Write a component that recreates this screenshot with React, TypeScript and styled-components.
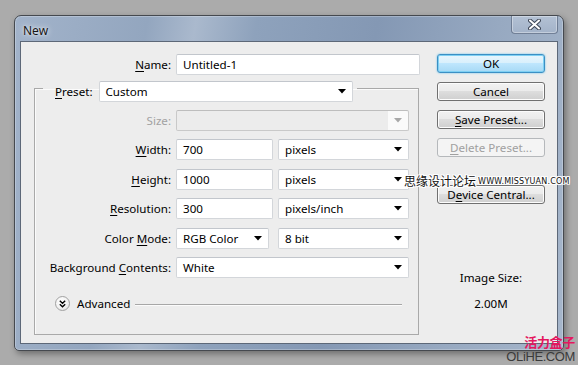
import styled, { createGlobalStyle } from "styled-components";

const GlobalStyle = createGlobalStyle`
  html, body {
    margin: 0;
    padding: 0;
    background: #ababab;
  }
  * {
    box-sizing: border-box;
  }
`;

const FONT = `"Noto Sans", "Liberation Sans", sans-serif`;

const Page = styled.div`
  position: relative;
  width: 578px;
  height: 365px;
  padding: 15px 0 0 14px;
  background: #ababab;
  font-family: ${FONT};
  font-size: 11.6px;
  color: #000;
  overflow: hidden;
`;

const Window = styled.div`
  width: 550px;
  height: 336px;
  display: flex;
  flex-direction: column;
  padding: 0 5px 6px 5px;
  border: 1px solid #45494f;
  border-radius: 7px 7px 5px 5px;
  background: linear-gradient(
    100deg,
    #a2b3ca 0%,
    #93a6bf 22%,
    #aab9cd 30%,
    #8ea2bc 40%,
    #8498b4 60%,
    #97a9c1 80%,
    #a6b6cb 100%
  );
  box-shadow: 0 0 0 1px rgba(255, 255, 255, 0.25) inset, 2px 3px 6px rgba(0, 0, 0, 0.35);
`;

const TitleBar = styled.div`
  height: 25px;
  flex: none;
  display: flex;
  justify-content: space-between;
  align-items: flex-start;
`;

const Title = styled.span`
  margin: 7px 0 0 3px;
  font-size: 12px;
  line-height: 15px;
  color: #151515;
  text-shadow: 0 0 6px rgba(255, 255, 255, 0.9), 0 0 2px rgba(255, 255, 255, 0.7);
`;

const CloseButton = styled.div`
  width: 47px;
  height: 18px;
  display: flex;
  align-items: center;
  justify-content: center;
  border: 1px solid rgba(60, 75, 100, 0.55);
  border-top: none;
  border-radius: 0 0 4px 4px;
  background: linear-gradient(#b3c1d4, #a3b3c9);
  box-shadow: 0 0 0 1px rgba(255, 255, 255, 0.35) inset;
`;

const Client = styled.div`
  flex: 1;
  display: flex;
  border: 1px solid #5d6878;
  background: #ededed;
`;

const LeftPane = styled.div`
  width: 416px;
  flex: none;
`;

const Row = styled.div`
  display: flex;
  align-items: center;
  height: 21px;
`;

const Label = styled.label<{ $width: number; $disabled?: boolean }>`
  width: ${(p) => p.$width}px;
  flex: none;
  text-align: right;
  margin-right: 5px;
  white-space: nowrap;
  color: ${(p) => (p.$disabled ? "#a2a2a2" : "#000")};
  u {
    text-decoration: underline;
    text-underline-offset: 2px;
  }
`;

const NameRow = styled(Row)`
  margin-top: 12px;
`;

const TextBox = styled.div<{ $width: number }>`
  width: ${(p) => p.$width}px;
  height: 21px;
  flex: none;
  display: flex;
  align-items: center;
  padding-left: 6px;
  background: #fff;
  border: 1px solid #d3d6da;
  border-top-color: #c2c6cc;
  border-radius: 2px;
  white-space: nowrap;
`;

const SelectBox = styled.div<{ $width: number; $disabled?: boolean }>`
  width: ${(p) => p.$width}px;
  height: 21px;
  flex: none;
  display: flex;
  align-items: center;
  justify-content: space-between;
  padding-left: 6px;
  background: ${(p) => (p.$disabled ? "#ececec" : "#fff")};
  border: 1px solid ${(p) => (p.$disabled ? "#c9c9c9" : "#d3d6da")};
  border-top-color: ${(p) => (p.$disabled ? "#bdbdbd" : "#c2c6cc")};
  border-radius: 2px;
  white-space: nowrap;
`;

const ArrowCell = styled.div<{ $disabled?: boolean }>`
  width: 20px;
  height: 19px;
  display: flex;
  align-items: center;
  justify-content: center;
  background: ${(p) => (p.$disabled ? "#fafafa" : "transparent")};
  border-radius: 0 2px 2px 0;
  svg path {
    fill: ${(p) => (p.$disabled ? "#a8a8a8" : "#000")};
  }
`;

const GroupBox = styled.fieldset`
  width: 385px;
  margin: 3px 0 0 13px;
  padding: 0 0 20px 8px;
  border: 1px solid #a9a9a9;
  box-shadow: 1px 1px 0 #fbfbfb inset;
  min-inline-size: 0;
`;

const Legend = styled.legend`
  height: 21px;
  padding: 0 4px 0 12px;
`;

const LegendInner = styled.div`
  position: relative;
  top: 3px;
  display: flex;
  align-items: center;
  height: 21px;
`;

const PresetLabel = styled.span`
  margin-right: 6px;
  u {
    text-underline-offset: 2px;
  }
`;

const FieldRows = styled.div`
  display: flex;
  flex-direction: column;
  gap: 8.4px;
  padding-top: 11px;
`;

const Controls = styled.div<{ $gap: number }>`
  display: flex;
  gap: ${(p) => p.$gap}px;
`;

const AdvancedRow = styled.div`
  display: flex;
  align-items: center;
  height: 20px;
  margin: 16px 16px 0 12px;
`;

const Chevron = styled.div`
  width: 15px;
  height: 15px;
  flex: none;
  display: flex;
  align-items: center;
  justify-content: center;
  border-radius: 50%;
  border: 1px solid #a2a2a2;
  background: radial-gradient(circle at 40% 35%, #ffffff 0%, #f2f2f2 55%, #d9d9d9 100%);
`;

const AdvancedText = styled.span`
  margin-left: 7px;
  white-space: nowrap;
`;

const Rule = styled.div`
  flex: 1;
  height: 1px;
  margin: 2px 0 0 5px;
  background: #a7a7a7;
  box-shadow: 0 1px 0 #fbfbfb;
`;

const RightPane = styled.div`
  width: 108px;
  flex: none;
  padding-top: 12px;
  display: flex;
  flex-direction: column;
  align-items: stretch;
`;

const ButtonStack = styled.div`
  display: flex;
  flex-direction: column;
  gap: 9px;
`;

const Button = styled.div<{ $variant?: "default" | "disabled"; $space?: number }>`
  height: 19px;
  margin-top: ${(p) => p.$space ?? 0}px;
  display: flex;
  align-items: center;
  justify-content: center;
  border-radius: 3px;
  white-space: nowrap;
  line-height: 1;
  padding-top: 1px;
  ${(p) =>
    p.$variant === "default"
      ? `
    border: 1px solid #3c8fc4;
    background: linear-gradient(#eaf6fd 0%, #d9f0fc 45%, #bee6fd 50%, #a7d9f5 100%);
    box-shadow: 0 0 0 1px #7fd0f3 inset, 0 0 2px #5cc1ee;
    color: #000;
  `
      : p.$variant === "disabled"
      ? `
    border: 1px solid #b5b8bb;
    background: #f4f4f4;
    color: #a0a0a0;
  `
      : `
    border: 1px solid #707070;
    background: linear-gradient(#f2f2f2 0%, #ebebeb 45%, #dddddd 50%, #cfcfcf 100%);
    box-shadow: 0 0 0 1px #fcfcfc inset;
    color: #000;
  `}
  u {
    text-underline-offset: 2px;
  }
`;

const InfoLabel = styled.div<{ $space: number }>`
  margin-top: ${(p) => p.$space}px;
  text-align: center;
  line-height: 15px;
`;

const SiteMark = styled.div`
  position: absolute;
  left: 404px;
  top: 174px;
  display: flex;
  align-items: center;
  gap: 2px;
  color: #111;
  text-shadow: 1px 0 0 #fff, -1px 0 0 #fff, 0 1px 0 #fff, 0 -1px 0 #fff, 1px 1px 0 #fff,
    -1px -1px 0 #fff, 1px -1px 0 #fff, -1px 1px 0 #fff;
  white-space: nowrap;
`;

const SiteCjk = styled.span`
  font-family: "Noto Sans CJK SC", sans-serif;
  font-size: 12px;
  line-height: 14px;
`;

const SiteUrl = styled.span`
  font-family: "DejaVu Sans", sans-serif;
  font-size: 8px;
  letter-spacing: 0.2px;
  line-height: 10px;
  margin-top: 2px;
`;

const BrandMark = styled.div`
  position: absolute;
  right: 3px;
  bottom: 2px;
  display: flex;
  flex-direction: column;
  align-items: flex-end;
`;

const BrandCjk = styled.span`
  font-family: "Noto Sans CJK SC", sans-serif;
  font-weight: 700;
  font-size: 13px;
  line-height: 14px;
  color: #e4175f;
  letter-spacing: -0.3px;
  margin-bottom: 1px;
`;

const BrandUrl = styled.span`
  font-family: "Liberation Sans", sans-serif;
  font-size: 13px;
  line-height: 13px;
  color: #3b3b3b;
  letter-spacing: -0.4px;
`;

function Arrow() {
  return (
    <svg width="8" height="5" viewBox="0 0 8 5">
      <path d="M0 0 H8 L4 4.5 Z" />
    </svg>
  );
}

function Select({
  value,
  width,
  disabled,
}: {
  value: string;
  width: number;
  disabled?: boolean;
}) {
  return (
    <SelectBox $width={width} $disabled={disabled}>
      <span>{value}</span>
      <ArrowCell $disabled={disabled}>
        <Arrow />
      </ArrowCell>
    </SelectBox>
  );
}

const LABEL_W = 128;

export default function App() {
  return (
    <>
      <GlobalStyle />
      <Page>
        <Window>
          <TitleBar>
            <Title>New</Title>
            <CloseButton>
              <svg width="13" height="11" viewBox="0 0 13 11">
                <path
                  d="M2 1.5 L11 9.5 M11 1.5 L2 9.5"
                  stroke="#3d4656"
                  strokeWidth="4"
                  strokeLinecap="round"
                />
                <path
                  d="M2 1.5 L11 9.5 M11 1.5 L2 9.5"
                  stroke="#ffffff"
                  strokeWidth="2"
                  strokeLinecap="round"
                />
              </svg>
            </CloseButton>
          </TitleBar>
          <Client>
            <LeftPane>
              <NameRow>
                <Label $width={150}>
                  <u>N</u>ame:
                </Label>
                <TextBox $width={244}>Untitled-1</TextBox>
              </NameRow>

              <GroupBox>
                <Legend>
                  <LegendInner>
                    <PresetLabel>
                      <u>P</u>reset:
                    </PresetLabel>
                    <Select value="Custom" width={254} />
                  </LegendInner>
                </Legend>

                <FieldRows>
                  <Row>
                    <Label $width={LABEL_W} $disabled>
                      Size:
                    </Label>
                    <Select value="" width={233} disabled />
                  </Row>
                  <Row>
                    <Label $width={LABEL_W}>
                      <u>W</u>idth:
                    </Label>
                    <Controls $gap={5}>
                      <TextBox $width={97}>700</TextBox>
                      <Select value="pixels" width={131} />
                    </Controls>
                  </Row>
                  <Row>
                    <Label $width={LABEL_W}>
                      <u>H</u>eight:
                    </Label>
                    <Controls $gap={5}>
                      <TextBox $width={97}>1000</TextBox>
                      <Select value="pixels" width={131} />
                    </Controls>
                  </Row>
                  <Row>
                    <Label $width={LABEL_W}>
                      <u>R</u>esolution:
                    </Label>
                    <Controls $gap={5}>
                      <TextBox $width={97}>300</TextBox>
                      <Select value="pixels/inch" width={131} />
                    </Controls>
                  </Row>
                  <Row>
                    <Label $width={LABEL_W}>
                      Color <u>M</u>ode:
                    </Label>
                    <Controls $gap={9}>
                      <Select value="RGB Color" width={93} />
                      <Select value="8 bit" width={131} />
                    </Controls>
                  </Row>
                  <Row>
                    <Label $width={LABEL_W}>
                      Background <u>C</u>ontents:
                    </Label>
                    <Select value="White" width={233} />
                  </Row>
                </FieldRows>

                <AdvancedRow>
                  <Chevron>
                    <svg width="7" height="8" viewBox="0 0 7 8">
                      <path
                        d="M0.8 0.8 L3.5 3.3 L6.2 0.8 M0.8 4.3 L3.5 6.8 L6.2 4.3"
                        stroke="#000"
                        strokeWidth="1.4"
                        fill="none"
                      />
                    </svg>
                  </Chevron>
                  <AdvancedText>Advanced</AdvancedText>
                  <Rule />
                </AdvancedRow>
              </GroupBox>
            </LeftPane>

            <RightPane>
              <ButtonStack>
                <Button $variant="default">OK</Button>
                <Button>Cancel</Button>
                <Button>
                  <u>S</u>ave Preset...
                </Button>
                <Button $variant="disabled">
                  <u>D</u>elete Preset...
                </Button>
                <Button $space={19}>
                  D<u>e</u>vice Central...
                </Button>
              </ButtonStack>
              <InfoLabel $space={66}>Image Size:</InfoLabel>
              <InfoLabel $space={11}>2.00M</InfoLabel>
            </RightPane>
          </Client>
        </Window>

        <SiteMark>
          <SiteCjk>思缘设计论坛</SiteCjk>
          <SiteUrl>WWW.MISSYUAN.COM</SiteUrl>
        </SiteMark>

        <BrandMark>
          <BrandCjk>活力盒子</BrandCjk>
          <BrandUrl>OLiHE.COM</BrandUrl>
        </BrandMark>
      </Page>
    </>
  );
}
